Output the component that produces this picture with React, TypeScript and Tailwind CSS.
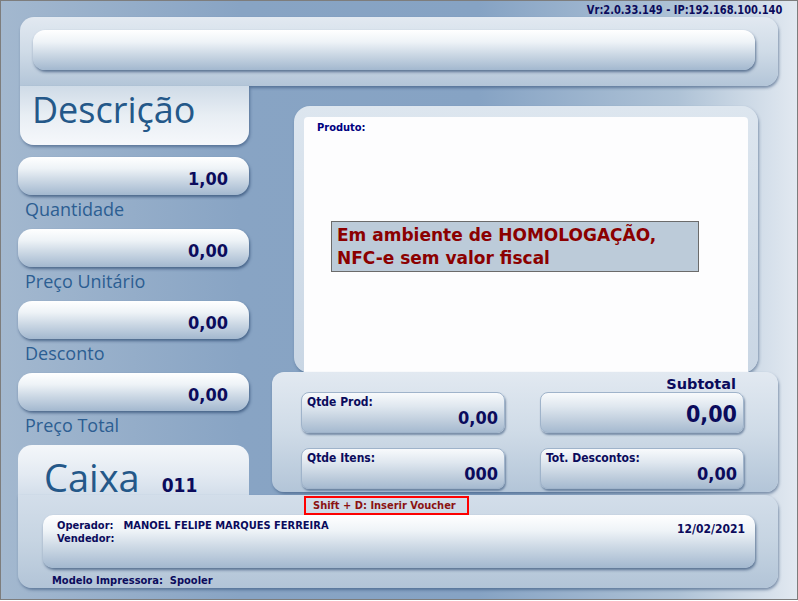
const navy = "text-[#0b0b5c]";
const verdana = "font-['DejaVu_Sans',sans-serif] font-bold";
const digits = "font-['DejaVu_Sans_Condensed','DejaVu_Sans',sans-serif] font-bold";
const trebuchet = "font-['Open_Sans',sans-serif]";

const panel =
  "bg-[linear-gradient(180deg,#e2e9f1_0%,#cfdbe7_50%,#b3c5d8_100%)] shadow-[1px_2px_3px_rgba(45,75,115,0.55)]";
const bar =
  "bg-[linear-gradient(180deg,#ffffff_0%,#eef3f7_30%,#cdd9e5_60%,#a3b8cf_100%)] shadow-[1px_2px_3px_rgba(35,65,105,0.65)]";
const box =
  "bg-[linear-gradient(180deg,#f8fafc_0%,#dfe7ef_35%,#bccbdb_75%,#a6bad0_100%)] border border-[#9fb3ca] shadow-[1px_2px_2px_rgba(35,65,105,0.5)]";

function Field({ value, label }: { value: string; label: string }) {
  return (
    <div className="flex flex-col">
      <div className={`h-[38px] rounded-[14px] ${bar} flex items-center justify-end pr-[21px] pt-[5px]`}>
        <span className={`${digits} text-[18px] leading-[20px] ${navy}`}>{value}</span>
      </div>
      <div className={`h-[34px] pl-[7px] pt-[3px] ${trebuchet} text-[18px] leading-[22px] text-[#2c5e92]`}>
        {label}
      </div>
    </div>
  );
}

function TotalBox({ label, value, big }: { label: string; value: string; big?: boolean }) {
  return (
    <div className={`relative h-[41px] rounded-[8px] ${box}`}>
      {label && (
        <span className={`absolute left-[5px] top-[2px] ${digits} text-[12px] leading-[14px] ${navy}`}>{label}</span>
      )}
      <span
        className={`absolute right-[6px] ${big ? "top-[8px] text-[23px] leading-[26px]" : "bottom-[4px] text-[18px] leading-[20px]"} ${digits} ${navy}`}
      >
        {value}
      </span>
    </div>
  );
}

export default function App() {
  return (
    <div className="w-[798px] h-[601px] overflow-hidden bg-white">
      <div className="w-[798px] h-[600px] border border-[#7d7d7d] flex flex-col bg-[linear-gradient(90deg,#a3b8cf_0%,#88a4c4_30%,#86a3c4_60%,#aec2d6_85%,#e2e9f1_100%)]">
        {/* version */}
        <div className="h-[16px] flex justify-end pr-[15px]">
          <span className={`${digits} text-[13px] leading-[14px] mt-[2px] ${navy} scale-x-[0.845] origin-right whitespace-nowrap`}>
            Vr:2.0.33.149 - IP:192.168.100.140
          </span>
        </div>

        {/* top panel */}
        <div className={`ml-[19px] w-[758px] h-[69px] rounded-t-[14px] rounded-br-[14px] ${panel} pt-[13px] pl-[13px]`}>
          <div className={`w-[722px] h-[40px] rounded-[12px] ${bar}`} />
        </div>

        {/* body */}
        <div className="flex h-[409px]">
          <div className="ml-[17px] w-[231px] flex flex-col">
            <div className="ml-[2px] w-[229px] h-[59px] rounded-b-[14px] bg-[linear-gradient(180deg,#cfdbe7_0%,#e8eef4_50%,#f6f8fb_100%)] shadow-[1px_2px_3px_rgba(45,75,115,0.55)] pl-[12px] pt-[4px]">
              <span className={`${trebuchet} text-[36px] leading-[40px] text-[#245889]`}>Descrição</span>
            </div>
            <div className="mt-[12px] flex flex-col">
              <Field value="1,00" label="Quantidade" />
              <Field value="0,00" label="Preço Unitário" />
              <Field value="0,00" label="Desconto" />
              <Field value="0,00" label="Preço Total" />
            </div>
            <div className="h-[50px] rounded-t-[14px] bg-[linear-gradient(180deg,#f4f7fa_0%,#e3eaf2_60%,#d3deea_100%)] pl-[26px] pt-[11px] flex items-baseline gap-[22px]">
              <span className={`${trebuchet} text-[38px] leading-[42px] text-[#245889]`}>Caixa</span>
              <span className={`${digits} text-[19px] ${navy}`}>011</span>
            </div>
          </div>

          <div className="flex flex-col">
            {/* product panel */}
            <div className="ml-[45px] mt-[20px] w-[464px] h-[267px] rounded-[16px] bg-[linear-gradient(180deg,#dde6ef_0%,#c9d6e4_100%)] shadow-[1px_2px_3px_rgba(45,75,115,0.5)] pt-[11px] px-[10px] flex flex-col">
              <div className="flex-1 bg-[#fdfdfe] rounded-t-[4px] pl-[13px] pt-[4px] flex flex-col">
                <span className={`${digits} text-[11px] leading-[13px] text-[#000080]`}>Produto:</span>
                <div className="mt-[87px] ml-[14px] w-[368px] h-[51px] bg-[#bccbd9] border border-[#6b6b6b] pl-[5px] pt-[2px]">
                  <p className={`${verdana} text-[17px] leading-[23px] text-[#8b0000]`}>
                    Em ambiente de HOMOLOGAÇÃO,
                    <br />
                    NFC-e sem valor fiscal
                  </p>
                </div>
              </div>
            </div>

            {/* totals panel */}
            <div className={`ml-[23px] -mt-[1px] w-[506px] h-[120px] rounded-[12px] ${panel} pt-[4px] flex flex-col`}>
              <div className="h-[16px] flex justify-end pr-[42px]">
                <span className={`${verdana} text-[14.5px] leading-[16px] ${navy}`}>Subtotal</span>
              </div>
              <div className="ml-[29px] w-[443px] grid grid-cols-[204px_204px] gap-x-[35px] gap-y-[15px]">
                <TotalBox label="Qtde Prod:" value="0,00" />
                <TotalBox label="" value="0,00" big />
                <TotalBox label="Qtde Itens:" value="000" />
                <TotalBox label="Tot. Descontos:" value="0,00" />
              </div>
            </div>
          </div>
        </div>

        {/* bottom panel */}
        <div className="ml-[17px] w-[760px] h-[93px] rounded-b-[14px] rounded-tr-[14px] bg-[linear-gradient(180deg,#d3deea_0%,#c6d4e2_50%,#b2c4d7_100%)] shadow-[1px_2px_3px_rgba(45,75,115,0.55)] flex flex-col">
          <div className="ml-[286px] mt-[1px] w-[165px] h-[19px] border-2 border-[#ff0000] flex items-center pl-[7px]">
            <span className={`${digits} text-[11px] leading-[12px] whitespace-nowrap text-[#8b1212]`}>
              Shift + D: Inserir Voucher
            </span>
          </div>
          <div className={`ml-[25px] w-[712px] h-[53px] rounded-[10px] ${bar} pl-[14px] pr-[10px] pt-[4px] flex justify-between`}>
            <div className={`${digits} text-[11px] leading-[13px] ${navy}`}>
              <div>
                Operador:<span className="ml-[10px]">MANOEL FELIPE MARQUES FERREIRA</span>
              </div>
              <div>Vendedor:</div>
            </div>
            <span className={`${digits} text-[12px] leading-[14px] mt-[3px] ${navy}`}>12/02/2021</span>
          </div>
          <div className={`pl-[34px] mt-[6px] ${digits} text-[11px] leading-[13px] ${navy}`}>
            Modelo Impressora:<span className="ml-[7px]">Spooler</span>
          </div>
        </div>
      </div>
    </div>
  );
}
